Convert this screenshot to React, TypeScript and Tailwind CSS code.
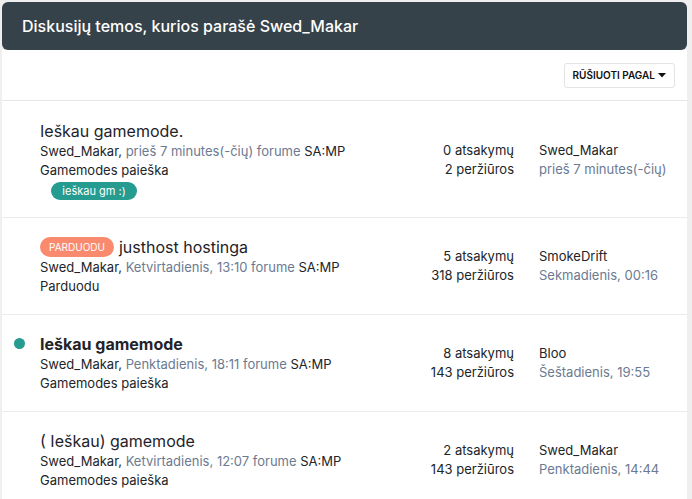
import React from "react";

type Topic = {
  title: string;
  bold?: boolean;
  dot?: boolean;
  badge?: string;
  date: string;
  sub: string;
  tag?: string;
  replies: string;
  views: string;
  lastUser: string;
  lastDate: string;
};

const topics: Topic[] = [
  {
    title: "Ieškau gamemode.",
    date: "prieš 7 minutes(-čių) forume",
    sub: "Gamemodes paieška",
    tag: "ieškau gm :)",
    replies: "0 atsakymų",
    views: "2 peržiūros",
    lastUser: "Swed_Makar",
    lastDate: "prieš 7 minutes(-čių)",
  },
  {
    title: "justhost hostinga",
    badge: "PARDUODU",
    date: "Ketvirtadienis, 13:10 forume",
    sub: "Parduodu",
    replies: "5 atsakymų",
    views: "318 peržiūros",
    lastUser: "SmokeDrift",
    lastDate: "Sekmadienis, 00:16",
  },
  {
    title: "Ieškau gamemode",
    bold: true,
    dot: true,
    date: "Penktadienis, 18:11 forume",
    sub: "Gamemodes paieška",
    replies: "8 atsakymų",
    views: "143 peržiūros",
    lastUser: "Bloo",
    lastDate: "Šeštadienis, 19:55",
  },
  {
    title: "( Ieškau) gamemode",
    date: "Ketvirtadienis, 12:07 forume",
    sub: "Gamemodes paieška",
    replies: "2 atsakymų",
    views: "143 peržiūros",
    lastUser: "Swed_Makar",
    lastDate: "Penktadienis, 14:44",
  },
];

function Row({ t, first }: { t: Topic; first: boolean }) {
  return (
    <div
      className={`relative flex items-center border-b border-[#ebebeb] ${
        first ? "pt-[19px] pb-[17px]" : "py-[18px]"
      }`}
    >
      {t.dot && (
        <span className="absolute left-[12px] top-[23px] h-[11px] w-[11px] rounded-full bg-[#269b8f]" />
      )}
      <div className="flex-1 pl-[38px]">
        <div className="flex h-[22px] items-center">
          {t.badge && (
            <span className="mr-[5px] inline-flex h-[20px] items-center rounded-full bg-[#fa8a6e] px-[9px] text-[10px] leading-none text-white">
              {t.badge}
            </span>
          )}
          <span
            className={`text-[16px] leading-[22px] text-[#1f2329] ${
              t.bold ? "font-bold" : ""
            }`}
          >
            {t.title}
          </span>
        </div>
        <div className="text-[13px] leading-[19px] text-[#212529]">
          Swed_Makar, <span className="text-[#6c7a91]">{t.date}</span> SA:MP
        </div>
        <div className="text-[13px] leading-[19px] text-[#212529]">{t.sub}</div>
        {t.tag && (
          <div className="flex h-[20px] items-end pl-[11px]">
            <span className="inline-flex h-[18px] w-[86px] items-center justify-center rounded-full bg-[#269b8f] text-[11px] leading-none text-white">
              {t.tag}
            </span>
          </div>
        )}
      </div>
      <div className="w-[140px] text-right text-[13px] leading-[19px] text-[#212529]">
        <div>{t.replies}</div>
        <div>{t.views}</div>
      </div>
      <div className="ml-[25px] w-[148px] text-[13px] leading-[19px]">
        <div className="text-[#212529]">{t.lastUser}</div>
        <div className="text-[#6c7a91]">{t.lastDate}</div>
      </div>
    </div>
  );
}

export default function App() {
  return (
    <div
      className="min-h-[499px] bg-[#efefef] pl-[2px] pr-[5px] pt-[2px]"
      style={{ fontFamily: "Inter, 'Noto Sans', sans-serif" }}
    >
      <div className="flex h-[48px] items-center rounded-[6px] bg-[#36424a] px-[20px]">
        <h1 className="text-[16px] font-medium text-white">
          Diskusijų temos, kurios parašė Swed_Makar
        </h1>
      </div>
      <div className="bg-white">
        <div className="flex h-[51px] items-center justify-end border-b border-[#e6e6e6] pr-[12px]">
          <button className="flex h-[25px] items-center rounded-[3px] border border-[#e3e3e3] bg-white px-[8px] text-[10px] font-semibold text-[#111]">
            RŪŠIUOTI PAGAL
            <svg width="8" height="5" viewBox="0 0 8 5" className="ml-[3px]">
              <path d="M0 0 L8 0 L4 4.5 Z" fill="#111" />
            </svg>
          </button>
        </div>
        {topics.map((t, i) => (
          <Row key={i} t={t} first={i === 0} />
        ))}
      </div>
    </div>
  );
}
